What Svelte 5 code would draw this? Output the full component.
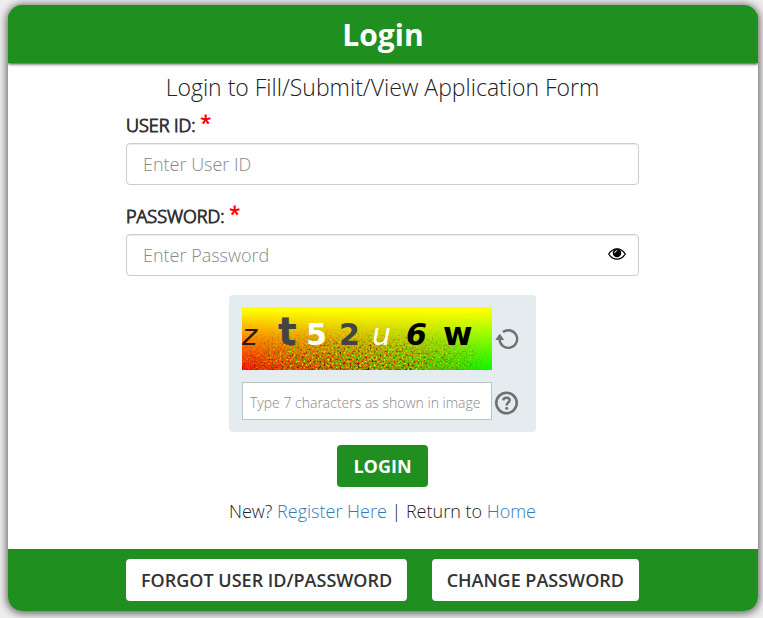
<script lang="ts">
  interface Glyph {
    char: string;
    x: number;
    y: number;
    size: number;
    fill: string;
    weight: number;
    slant?: boolean;
  }

  const glyphs: Glyph[] = [
    { char: 'z', x: 0, y: 38, size: 29, fill: '#2b1a08', weight: 400, slant: true },
    { char: 't', x: 36, y: 38, size: 39, fill: '#444', weight: 700 },
    { char: '5', x: 64, y: 38, size: 30, fill: '#fff', weight: 700 },
    { char: '2', x: 97, y: 38, size: 30, fill: '#444', weight: 700 },
    { char: 'u', x: 130, y: 38, size: 30, fill: '#fff', weight: 400, slant: true },
    { char: '6', x: 164, y: 38, size: 30, fill: '#000', weight: 700, slant: true },
    { char: 'w', x: 201, y: 38, size: 32, fill: '#000', weight: 700 },
  ];

  let userId = $state('');
  let password = $state('');
  let captcha = $state('');
  let showPassword = $state(false);
</script>

<main class="page">
  <form class="card" onsubmit={(e) => e.preventDefault()}>
    <header class="card-header">
      <h1>Login</h1>
    </header>

    <div class="card-body">
      <h2>Login to Fill/Submit/View Application Form</h2>

      <div class="field">
        <label for="user-id">USER ID: <span class="required">*</span></label>
        <input id="user-id" class="control" type="text" placeholder="Enter User ID" bind:value={userId} />
      </div>

      <div class="field">
        <label for="password">PASSWORD: <span class="required">*</span></label>
        <div class="password">
          <input
            id="password"
            class="control"
            type={showPassword ? 'text' : 'password'}
            placeholder="Enter Password"
            bind:value={password}
          />
          <button
            type="button"
            class="toggle"
            aria-label="Show password"
            aria-pressed={showPassword}
            onclick={() => (showPassword = !showPassword)}
          >
            <svg width="18" height="12" viewBox="0 0 18 12">
              <path d="M.7 6Q4 .8 9 .8T17.300 6Q14 11.200 9 11.200T.7 6Z" fill="#fff" stroke="#000" stroke-width="1.300" />
              <circle cx="9" cy="5" r="4.300" />
              <path d="M6.700 4.800Q6.800 2.700 8.900 2.500" fill="none" stroke="#fff" stroke-width="1" stroke-linecap="round" />
            </svg>
          </button>
        </div>
      </div>

      <div class="captcha">
        <svg class="captcha-image" width="250" height="63" viewBox="0 0 250 63" role="img" aria-label="Captcha">
          <defs>
            <linearGradient id="across">
              <stop offset="0" stop-color="#f00" />
              <stop offset="0.500" stop-color="#9a8000" />
              <stop offset="1" stop-color="#0f0" />
            </linearGradient>
            <linearGradient id="down" x1="0" y1="0" x2="0" y2="1">
              <stop offset="0.050" stop-color="#ff0" />
              <stop offset="1" stop-color="#ff0" stop-opacity="0" />
            </linearGradient>
            <linearGradient id="fade" x1="0" y1="0" x2="0" y2="1">
              <stop offset="0.050" stop-color="#000" />
              <stop offset="0.900" stop-color="#fff" />
            </linearGradient>
            <radialGradient id="spread" cx="0.450" cy="0.800" r="0.550">
              <stop offset="0" stop-color="#fff" />
              <stop offset="0.500" stop-color="#bbb" />
              <stop offset="1" stop-color="#111" />
            </radialGradient>
            <mask id="grain-mask">
              <rect width="250" height="63" fill="url(#spread)" />
            </mask>
            <mask id="fade-mask">
              <rect width="250" height="63" fill="url(#fade)" />
            </mask>
            <filter id="grain" x="0" y="0" width="1" height="1" color-interpolation-filters="sRGB">
              <feTurbulence type="fractalNoise" baseFrequency="0.500" numOctaves="2" seed="7" />
              <feColorMatrix values="4 0 0 0 -1.300  0 4 0 0 -1.400  0 0 0 0 0  0 0 3 0 -1" />
            </filter>
          </defs>
          <rect width="250" height="63" fill="url(#across)" />
          <rect width="250" height="63" fill="url(#down)" />
          <g mask="url(#fade-mask)">
            <g mask="url(#grain-mask)">
              <rect width="250" height="63" filter="url(#grain)" />
            </g>
          </g>
          {#each glyphs as g}
            <text
              x={g.x}
              y={g.y}
              font-size={g.size}
              fill={g.fill}
              font-weight={g.weight}
              font-style={g.slant ? 'italic' : 'normal'}>{g.char}</text
            >
          {/each}
        </svg>
        <button type="button" class="icon" aria-label="Refresh captcha">
          <svg width="24" height="24" viewBox="0 0 24 24">
            <path d="M8 5A8.800 8.800 0 1 1 4.500 12" fill="none" stroke="#707070" stroke-width="2.400" />
            <path d="M.2 13 4.700 6.800 9.300 13Z" fill="#707070" />
          </svg>
        </button>
        <input
          class="captcha-input"
          type="text"
          aria-label="Captcha characters"
          placeholder="Type 7 characters as shown in image"
          bind:value={captcha}
        />
        <button type="button" class="icon help" aria-label="Captcha help">
          <svg width="24" height="24" viewBox="0 0 24 24">
            <circle cx="11.500" cy="12" r="10.200" fill="none" stroke="#707070" stroke-width="2.600" />
            <path d="M8.300 9.300Q8.500 6.800 11.500 6.800 14.600 6.800 14.600 9.300 14.600 10.700 13 11.700 11.700 12.500 11.700 14.500" fill="none" stroke="#707070" stroke-width="2.500" />
            <circle cx="11.700" cy="17.200" r="1.500" fill="#707070" />
          </svg>
        </button>
      </div>

      <button type="submit" class="btn btn-login">LOGIN</button>

      <p class="links">New? <a href="#register">Register Here</a> | Return to <a href="#home">Home</a></p>
    </div>

    <footer class="card-footer">
      <div class="actions">
        <button type="button" class="btn">FORGOT USER ID/PASSWORD</button>
        <button type="button" class="btn">CHANGE PASSWORD</button>
      </div>
    </footer>
  </form>
</main>

<style>
  :global(body) {
    background: #eee;
  }
  .page {
    padding: 5px 5px 7px 8px;
    font-family: 'Open Sans', sans-serif;
    font-size: 18px;
    font-weight: 330;
    line-height: 26px;
    color: #222;
  }
  .page * {
    box-sizing: border-box;
  }
  .card {
    overflow: hidden;
    border-radius: 14px;
    background: #fff;
    box-shadow: 0 1px 8px 1px rgba(0, 0, 0, 0.65);
  }
  .card-header {
    position: relative;
    padding: 11px 16px 9px;
    background: #1f8f1f;
    box-shadow: 0 1px 3px rgba(0, 0, 0, 0.8);
    text-align: center;
  }
  h1 {
    margin: 0;
    font-size: 30px;
    line-height: 38px;
    font-weight: 700;
    color: #fff;
  }
  .card-body,
  .actions {
    max-width: 514px;
    margin: 0 auto;
    padding-right: 1px;
  }
  .card-body {
    display: flex;
    flex-direction: column;
    align-items: center;
    padding-top: 8px;
    padding-bottom: 25px;
  }
  h2 {
    margin: 0 0 6px;
    font-size: 23px;
    line-height: 32px;
    font-weight: 350;
    text-align: center;
  }
  .field {
    width: 100%;
    margin-bottom: 15px;
  }
  label {
    display: block;
    height: 34px;
    line-height: 32px;
    color: #333;
    -webkit-text-stroke: 1px;
  }
  .required {
    position: relative;
    top: -2px;
    font-size: 20px;
    line-height: 20px;
    color: #f00;
  }
  input,
  button {
    font-family: inherit;
    font-weight: inherit;
  }
  .control {
    display: block;
    width: 100%;
    height: 42px;
    padding: 6px 16px;
    border: 1px solid #ccc;
    border-radius: 4px;
    background: #fff;
    box-shadow: inset 0 1px 1px rgba(0, 0, 0, 0.08);
    font-size: 18px;
    color: #555;
  }
  input::placeholder {
    color: #888;
    opacity: 1;
  }
  .password {
    position: relative;
  }
  .password .control {
    padding-right: 44px;
  }
  .toggle {
    position: absolute;
    top: 0;
    right: 13px;
    display: flex;
    align-items: center;
    height: 40px;
    padding: 0;
    border: 0;
    background: none;
    cursor: pointer;
  }
  .captcha {
    display: grid;
    grid-template-columns: 250px 24px;
    align-items: center;
    gap: 12px 3px;
    margin: 4px 0 13px;
    padding: 12px 17px 12px 13px;
    border-radius: 4px;
    background: #e4ecef;
  }
  .captcha-image {
    display: block;
    font-family: 'DejaVu Sans', sans-serif;
  }
  .captcha-input {
    width: 250px;
    height: 38px;
    padding: 4px 6px 2px 7px;
    border: 1px solid #b9c4c9;
    border-radius: 0;
    background: #fff;
    font-size: 14px;
    color: #555;
  }
  .icon {
    display: flex;
    padding: 0;
    border: 0;
    background: none;
    cursor: pointer;
  }
  .help {
    margin-top: 4px;
  }
  .btn {
    height: 42px;
    padding: 0 15px 1px;
    border: 0;
    border-radius: 4px;
    background: #fff;
    font-size: 18px;
    font-weight: 600;
    color: #333;
    cursor: pointer;
  }
  .btn-login {
    padding: 0 16px 1px;
    background: #1f8f1f;
    font-weight: 700;
    color: #fff;
  }
  .links {
    margin: 11px 0 0;
  }
  a {
    color: #337ab7;
    text-decoration: none;
  }
  .card-footer {
    padding: 10px 0;
    background: #1f8f1f;
  }
  .actions {
    display: flex;
    flex-wrap: wrap;
    justify-content: space-between;
    gap: 8px;
  }
</style>
